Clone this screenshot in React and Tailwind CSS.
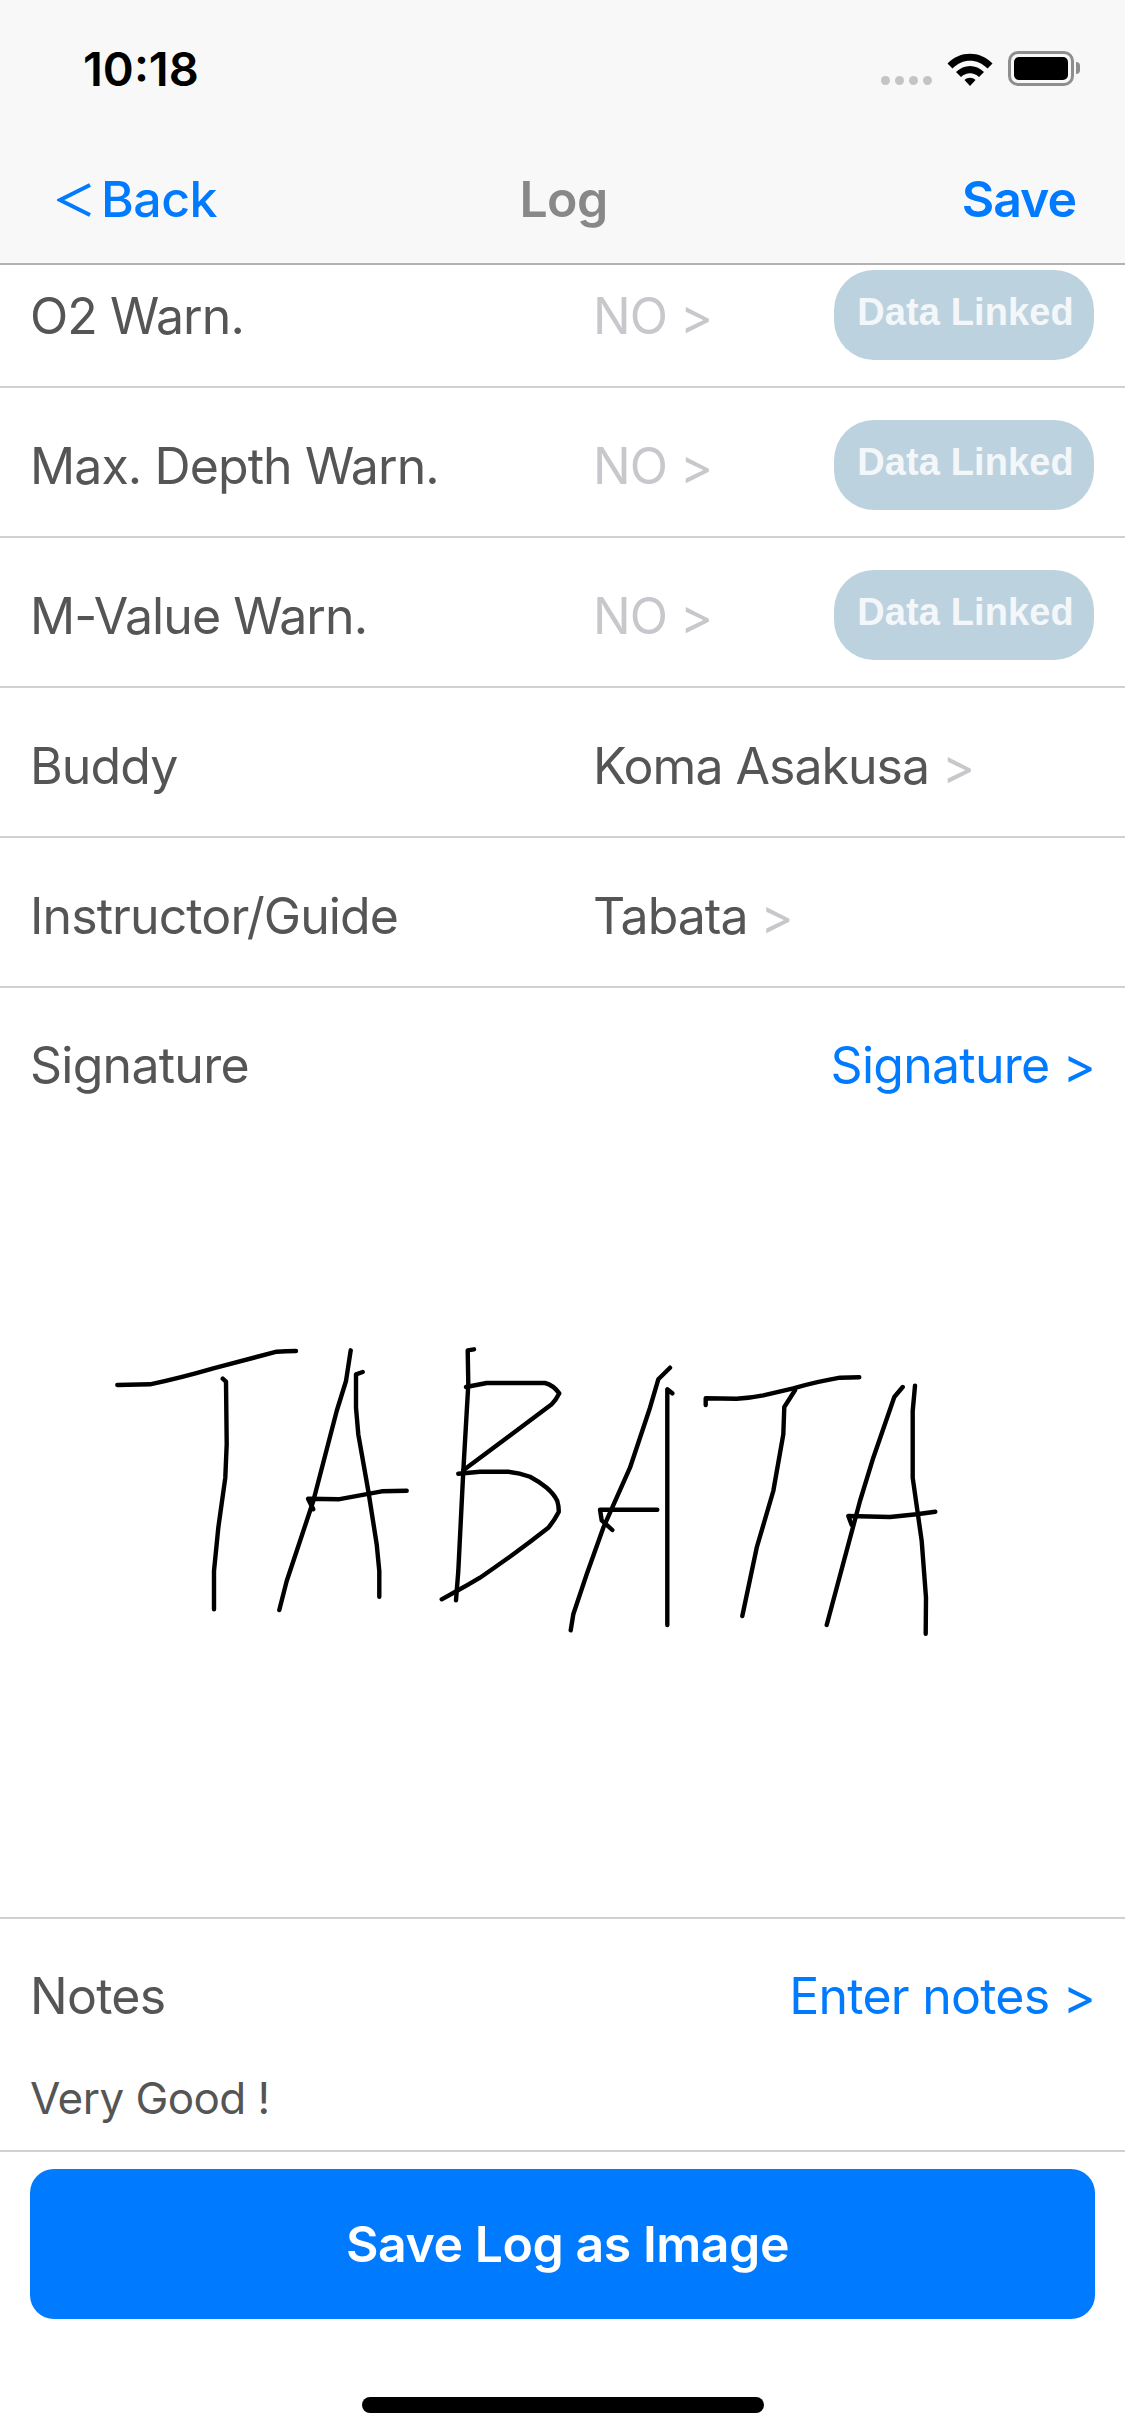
import React from "react";

const strokes = [
  "M117.3 1384L150 1383.3Q180 1377 213.3 1367.3L276.7 1350.7Q286 1350 296 1350",
  "M222.7 1377.7L226 1380.7L226.7 1443.3L225.3 1476.7L218.3 1526.7L214 1570L214 1608.3",
  "M350.7 1349.3L346 1380L336.7 1410L313.3 1500L296.7 1550L286.7 1580L279.3 1609",
  "M362.7 1371L356 1373.3L356 1406.7L358.3 1433.3L368.3 1490L376.7 1543.3L379.3 1570L379.3 1595.7",
  "M313.3 1508.3L308 1497.7L338.3 1498.3L381.7 1490.3L406.7 1489.7",
  "M474 1348.3L467.7 1349.3L468.3 1383.3L463.3 1470L458.3 1570L456 1599.3",
  "M466 1386L486.7 1382L545 1382Q553 1384 559.3 1392.3Q556 1399 551.7 1403.3L463.3 1469.3",
  "M458.3 1472.7L480 1470.7L508.3 1470.7Q520 1472 530 1475.7Q540 1481 546.7 1486.7Q554 1493 557.3 1500Q559 1506 558.7 1511Q554 1520 548.3 1526.7Q530 1541 513.3 1553.3Q497 1565 480 1576.7Q468 1584 456.7 1590L441.7 1598.3",
  "M670 1366.7L658.3 1378.3L650 1406.7L630 1466.7L603.3 1526.7L586.7 1573.3L573.3 1613.3L570.7 1629.3",
  "M672.3 1392.3L667.3 1388.3L667.3 1624",
  "M657.3 1508.7L600 1508.7L601.7 1519.3L612.3 1529",
  "M705.7 1404L705.7 1397.3L736.7 1397.7Q750 1397 763.3 1394.3L793.3 1387.3Q820 1380 840 1376.7L859.3 1376.3",
  "M795 1389.3L784.3 1406L783.3 1433.3L773.3 1490L756.7 1546.7L742.3 1615",
  "M902.7 1386L894.3 1396L873.3 1456.7L860 1500L826.7 1624",
  "M915 1384.7L912.7 1410L912.7 1476.7L921.7 1540L926 1596.7L925.7 1632.7",
  "M851.7 1524L848.3 1515L890 1516L916.7 1513.3L935.3 1510.7",
];

function Row({ label, value, muted, linked }) {
  return (
    <div className="flex h-[150px] shrink-0 items-center border-b-[2px] border-[#d0d0d0] pl-[30px] pr-[31px]">
      <span className="w-[563px] pt-[8px] tracking-[-0.9px] text-[#555555]">{label}</span>
      <span className={muted ? "pt-[8px] tracking-[-1px] text-[#c8c8cc]" : "pt-[8px] tracking-[-1px] text-[#555555]"}>
        {value} <span className="text-[#c8c8cc]">&gt;</span>
      </span>
      {linked && (
        <span className="ml-auto flex h-[90px] w-[260px] translate-y-[3px] items-center justify-center rounded-[40px] bg-[#bcd2de] pb-[6px] pl-[3px] text-[38px] font-bold tracking-[0.1px] text-[#f4f7f9] [font-family:'Liberation_Sans',sans-serif]">
          Data Linked
        </span>
      )}
    </div>
  );
}

export default function App() {
  return (
    <div className="flex h-[2436px] w-[1125px] flex-col overflow-hidden bg-white text-[50px] tracking-[-0.75px] [font-family:Inter,sans-serif]">
      <header className="relative z-10 flex h-[265px] shrink-0 flex-col border-b-[2px] border-[#b2b2b2] bg-[#f8f8f8]">
        <div className="flex h-[136px] items-center justify-between pl-[83px] pr-[45px]">
          <span className="pt-[2px] text-[47px] font-semibold tracking-[0px] text-black">10:18</span>
          <div className="flex items-end gap-[15px]">
            <div className="mb-[1px] flex gap-[5px]">
              <i className="h-[9px] w-[9px] rounded-full bg-[#c4c4c4]" />
              <i className="h-[9px] w-[9px] rounded-full bg-[#c4c4c4]" />
              <i className="h-[9px] w-[9px] rounded-full bg-[#c4c4c4]" />
              <i className="h-[9px] w-[9px] rounded-full bg-[#c4c4c4]" />
            </div>
            <svg width="46" height="34" viewBox="0 0 46 34">
              <path d="M0.5 11.5C13 -1.5 33 -1.5 45.5 11.5L40.5 16.5C30.5 6 15.5 6 5.5 16.5Z" />
              <path d="M9 20C17 12 29 12 37 20L32 25C26.5 20 19.5 20 14 25Z" />
              <path d="M17.5 28C20.5 25 25.5 25 28.5 28L23 34Z" />
            </svg>
            <div className="flex items-center gap-[2px]">
              <div className="flex h-[35px] w-[66px] rounded-[10px] border-[3px] border-[#8e8e8e] p-[3px]">
                <div className="flex-1 rounded-[5px] bg-black" />
              </div>
              <div className="h-[12px] w-[4px] rounded-r-full bg-[#8e8e8e]" />
            </div>
          </div>
        </div>
        <nav className="flex flex-1 items-start justify-between pl-[57px] pr-[49px] pt-[26px]">
          <div className="flex flex-1 items-center gap-[10px] text-[#007aff]">
            <svg width="34" height="34" viewBox="0 0 34 34" fill="none" stroke="#007aff" strokeWidth="4">
              <path d="M33 2L3 17L33 32" />
            </svg>
            <span className="text-[50px] font-medium tracking-[-0.5px]">Back</span>
          </div>
          <span className="-translate-x-[3px] text-[50px] font-semibold tracking-[-0.6px] text-[#888888]">Log</span>
          <span className="flex-1 text-right text-[50px] font-semibold tracking-[-1px] text-[#007aff]">Save</span>
        </nav>
      </header>

      <main className="-mt-[27px] flex flex-1 flex-col">
        <Row label="O2 Warn." value="NO" muted linked />
        <Row label="Max. Depth Warn." value="NO" muted linked />
        <Row label="M-Value Warn." value="NO" muted linked />
        <Row label="Buddy" value="Koma Asakusa" />
        <Row label="Instructor/Guide" value="Tabata" />

        <section className="flex h-[931px] shrink-0 flex-col border-b-[2px] border-[#d0d0d0]">
          <div className="flex h-[150px] shrink-0 items-center justify-between pl-[30px] pr-[30px] pt-[4px]">
            <span className="text-[#555555]">Signature</span>
            <span className="text-[#007aff]">Signature &gt;</span>
          </div>
          <svg className="block" width="1125" height="779" viewBox="0 1137 1125 779" fill="none" stroke="#000" strokeWidth="4.4" strokeLinecap="round" strokeLinejoin="round">
            {strokes.map((d) => (
              <path key={d} d={d} />
            ))}
          </svg>
        </section>

        <section className="flex h-[233px] shrink-0 flex-col border-b-[2px] border-[#d0d0d0] pl-[30px] pr-[30px]">
          <div className="flex h-[150px] shrink-0 items-center justify-between pt-[4px]">
            <span className="text-[#555555]">Notes</span>
            <span className="text-[#007aff]">Enter notes &gt;</span>
          </div>
          <span className="-mt-[4px] text-[44px] tracking-[-0.55px] text-[#555555]">Very Good !</span>
        </section>

        <div className="px-[30px] pt-[17px]">
          <button className="flex h-[150px] w-[1065px] items-center justify-center rounded-[24px] bg-[#007aff] pl-[10px] pt-[1px] text-[50px] font-semibold tracking-[-0.45px] text-white">
            Save Log as Image
          </button>
        </div>

        <div className="mt-[78px] flex justify-center">
          <div className="h-[16px] w-[402px] rounded-full bg-black" />
        </div>
      </main>
    </div>
  );
}
